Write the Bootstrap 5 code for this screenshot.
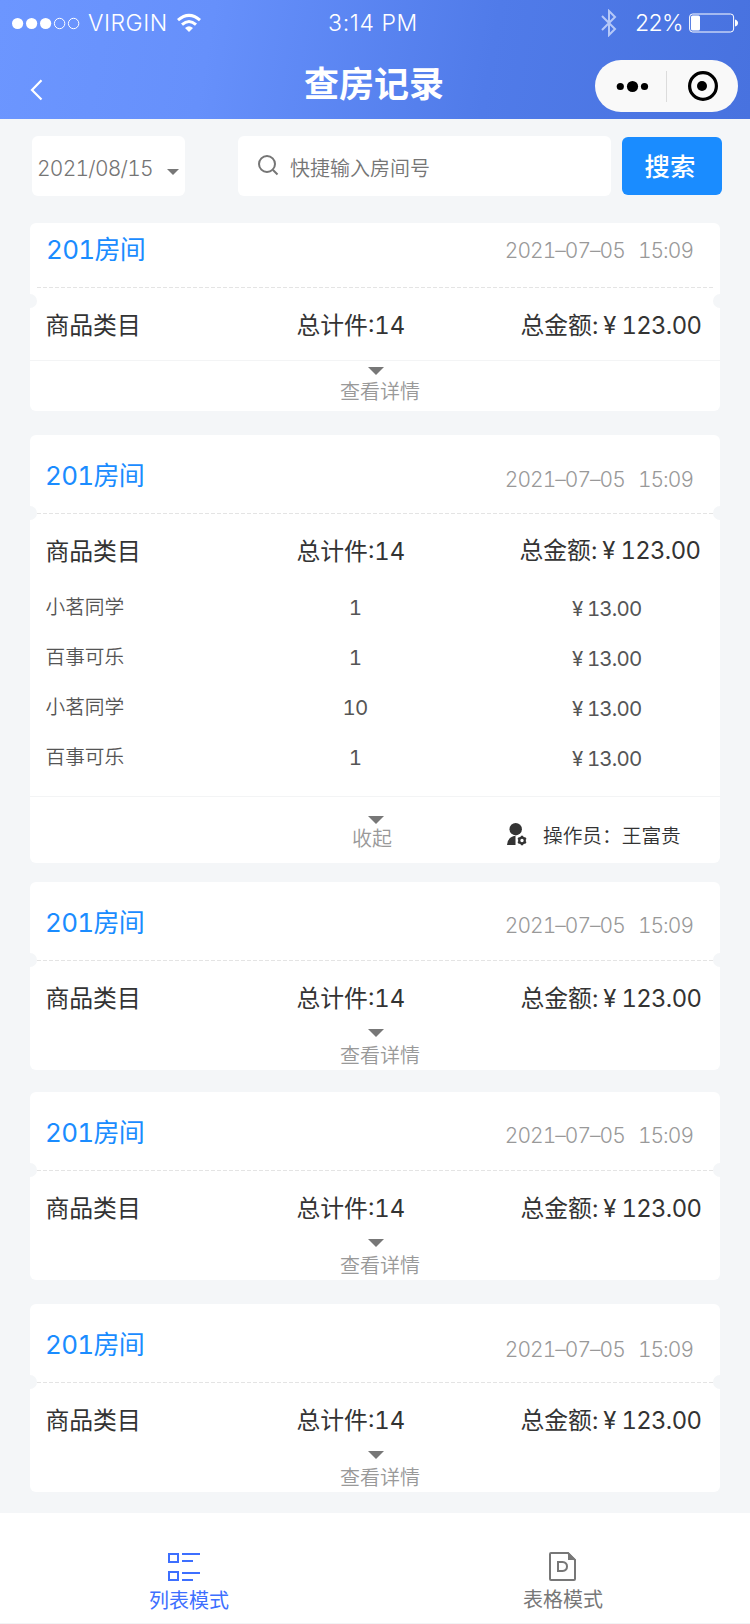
<!DOCTYPE html>
<html lang="zh-CN">
<head>
<meta charset="utf-8">
<meta name="viewport" content="width=device-width, initial-scale=1">
<title>查房记录</title>
<link href="https://cdn.jsdelivr.net/npm/bootstrap@5.3.0/dist/css/bootstrap.min.css" rel="stylesheet">
<style>
  body { font-family: Inter, "Noto Sans CJK SC", sans-serif; background: #f4f6f8; color: #333; font-size: 20px; line-height: 1.4; white-space: nowrap; overflow-x: hidden; font-variant-numeric: tabular-nums; }
  svg { display: block; flex: none; }
  .app-head { height: 119px; background: linear-gradient(100deg, #6c96ff 0%, #6690fb 28%, #507be9 65%, #4872df 100%); color: #fff; }
  .status { height: 44px; font-size: 23px; font-weight: 300; line-height: 46px; display: grid; grid-template-columns: 1fr auto 1fr; padding: 0 12px 0 12px; font-variant-numeric: normal; }
  .clock { letter-spacing: .6px; margin-left: -4px; }
  .carrier { letter-spacing: .5px; margin-left: 8px; }
  .title-bar { height: 75px; display: grid; grid-template-columns: 1fr auto 1fr; }
  .page-title { font-size: 35px; font-weight: 700; line-height: 80px; height: 75px; margin: 0 0 0 -2px; }
  .capsule { width: 143px; height: 52px; border-radius: 26px; background: #f9f9f9; margin: 16px 12px 0 auto; }
  .tools { padding: 17px 28px 0 32px; height: 104px; }
  .tool-box { height: 60px; border-radius: 6px; background: #fff; color: #757575; font-weight: 350; border: 0; }
  .tool-box > span:not(.tri) { padding-top: 6px; }
  .date-box { width: 153px; padding-left: 5px; }
  .date-text { font-size: 21px; width: 130px; letter-spacing: -.75px; }
  .search-box { width: 373px; margin-left: 53px; padding-left: 20px; }
  .search-btn { width: 100px; height: 58px; margin: 1px 0 0 11px; border-radius: 6px; background: #1a8cff; border: 0; color: #fff; font-size: 25.4px; font-weight: 500; padding: 3px 4px 0 0; }
  .tri { width: 16px; height: 8px; background: #777; clip-path: polygon(0 0, 100% 0, 50% 100%); }
  .tri-sm { width: 12px; height: 6px; position: relative; top: 2px; }

  .room { width: 690px; margin: 0 0 0 30px; background: #fff; border: 0; border-radius: 6px; }
  .room-head { height: 79px; padding: 0 27px 0 15px; }
  .room-head::after { content: ""; position: absolute; left: 7px; right: 7px; bottom: 0; height: 1px; background: repeating-linear-gradient(90deg, #e4e4e4 0 4px, transparent 4px 6px); }
  .notch { position: absolute; top: 71px; width: 7px; height: 14px; background: #f4f6f8; z-index: 1; }
  .notch-l { left: 0; border-radius: 0 7px 7px 0; }
  .notch-r { right: 0; border-radius: 7px 0 0 7px; }
  .room-name { font-size: 26px; line-height: 81px; color: #1a8cff; letter-spacing: -.7px; }
  .room-time { font-size: 21px; line-height: 87px; color: #999; font-weight: 350; word-spacing: 8.5px; letter-spacing: -.98px; }
  .totals { padding: 13px 0 0 15.5px; display: grid; grid-template-columns: 251px 224px 1fr; line-height: 50px; height: 62px; font-size: 23.8px; }
  .num { letter-spacing: -.6px; }
  .yen { margin: 0 5px 0 5px; }
  .more { color: #999; font-weight: 350; line-height: 28px; font-size: 20px; }
  .more .tri { margin-left: 2px; }
  .more-text { margin: 5px 0 0 10px; height: 28px; }

  .compact .room-head { height: 65px; }
  .compact .room-head .room-name { line-height: 54px; padding-left: 1px; }
  .compact .room-head .room-time { line-height: 56px; }
  .compact .notch { top: 71px; }
  .rule { height: 1px; background: #f3f4f5; }
  .item { display: grid; grid-template-columns: 251px 116px 1fr; height: 50px; padding-left: 16px; font-size: 19.7px; line-height: 50px; color: #555; }
  .item-name { font-weight: 350; margin-left: -.5px; }
  .item-qty { font-size: 20.5px; padding-top: 1px; letter-spacing: -.8px; }
  .item-price { padding: 2px 0 0 159px; font-size: 20.5px; letter-spacing: -.85px; }
  .item-price .yen { margin: 0 4.5px 0 0; }
  .open-foot { height: 66px; display: grid; grid-template-columns: 1fr 80px 1fr; }
  .operator { padding-left: 91px; padding-top: 3px; height: 76px; font-weight: 350; font-size: 19.7px; color: #333; }

  .tabs { height: 111px; background: #fff; margin-top: 21px; border-bottom: 1px solid #f2f3f5; font-size: 20px; line-height: 28px; color: #777; }
  .tabs a { text-decoration: none; color: inherit; }
  .tabs a.active { color: #3d6fff; }
</style>
</head>
<body>
<header class="app-head">
  <div class="status">
    <div class="d-flex align-items-center">
      <svg width="68" height="14" viewBox="0 0 68 14" fill="#fff" stroke="#fff"><g stroke="none"><circle cx="5.6" cy="7.5" r="5.6"/><circle cx="19.6" cy="7.5" r="5.6"/><circle cx="33.6" cy="7.5" r="5.6"/></g><g fill="none"><circle cx="47.6" cy="7.5" r="5.2"/><circle cx="61.6" cy="7.5" r="5.2"/></g></svg>
      <span class="carrier">VIRGIN</span>
      <svg style="margin-left:9px" width="24" height="20" viewBox="0 0 24 20" fill="none" stroke="#fff" stroke-width="3"><path d="M1 7.2Q12-2.4 23 7.2M5 11.6Q12 5.4 19 11.6"/><path d="M8 15Q12 11.5 16 15L12 19Z" fill="#fff" stroke="none"/></svg>
    </div>
    <span class="clock">3:14 PM</span>
    <div class="d-flex align-items-center justify-content-end">
      <svg style="margin-right:18px" width="16" height="28" viewBox="0 0 16 28" fill="none" stroke="#b5c8f8" stroke-width="2"><path d="M1 7 14 20 8 26V2L14 8 1 21"/></svg>
      <span style="letter-spacing:-.6px">22%</span>
      <svg style="margin-left:6px" width="49" height="20" viewBox="0 0 49 20" fill="none" stroke="#fff"><rect x=".6" y="1" width="44" height="18" rx="3"/><rect x="2" y="2.5" width="9" height="15" rx="1.5" fill="#fff" stroke="none"/><path d="M46 6.5Q49 7.5 49 10T46 13.5Z" fill="#fff" stroke="none"/></svg>
    </div>
  </div>
  <div class="title-bar">
    <a href="#" aria-label="返回"><svg style="margin:35px 0 0 30px" width="14" height="22" viewBox="0 0 14 22" fill="none" stroke="#fff" stroke-width="2.2"><path d="M11.5 1.2 2 11 11.5 20.5"/></svg></a>
    <h1 class="page-title">查房记录</h1>
    <div class="capsule">
      <svg width="143" height="52" viewBox="0 0 143 52"><circle cx="25.3" cy="26.5" r="3.6"/><circle cx="37.5" cy="26.5" r="5.6"/><circle cx="49.5" cy="26.5" r="3.6"/><path d="M71.5 11V42" stroke="#dcdcdc"/><circle cx="108" cy="26" r="13.4" fill="none" stroke="#000" stroke-width="3.2"/><circle cx="107" cy="26" r="5"/></svg>
    </div>
  </div>
</header>

<div class="tools d-flex align-items-start">
  <div class="tool-box date-box d-flex align-items-center"><span class="date-text">2021/08/15</span><span class="tri tri-sm mt-2"></span></div>
  <div class="tool-box search-box d-flex align-items-center">
    <svg width="22" height="22" viewBox="0 0 22 22" fill="none" stroke="#757575" stroke-width="2"><circle cx="9" cy="9" r="8"/><path d="M15 15 19.5 19.5"/></svg>
    <span style="margin-left:10px">快捷输入房间号</span>
  </div>
  <button class="btn search-btn" type="button">搜索</button>
</div>

<main>
  <section class="card room compact" style="margin-bottom:24px">
    <i class="notch notch-l"></i><i class="notch notch-r"></i>
    <div class="room-head position-relative d-flex justify-content-between"><span class="room-name">201房间</span><span class="room-time">2021–07–05 15:09</span></div>
    <div class="totals"><span>商品类目</span><span>总计件:14</span><span>总金额:<span class="yen">¥</span><span class="num">123.00</span></span></div>
    <div class="rule" style="margin-top:10px"></div>
    <div class="more d-flex flex-column align-items-center" style="padding:6px 0 5px"><i class="tri"></i><span class="more-text" style="margin-top:3px">查看详情</span></div>
  </section>

  <section class="card room" style="margin-bottom:19px">
    <i class="notch notch-l"></i><i class="notch notch-r"></i>
    <div class="room-head position-relative d-flex justify-content-between"><span class="room-name">201房间</span><span class="room-time" style="line-height:89px">2021–07–05 15:09</span></div>
    <div class="totals"><span>商品类目</span><span>总计件:14</span><span style="margin:-1px 0 0 -1px">总金额:<span class="yen">¥</span><span class="num">123.00</span></span></div>
    <div style="padding:6px 0 14px">
      <div class="item"><span class="item-name">小茗同学</span><span class="item-qty text-center">1</span><span class="item-price"><span class="yen">¥</span>13.00</span></div>
      <div class="item"><span class="item-name">百事可乐</span><span class="item-qty text-center">1</span><span class="item-price"><span class="yen">¥</span>13.00</span></div>
      <div class="item"><span class="item-name">小茗同学</span><span class="item-qty text-center">10</span><span class="item-price"><span class="yen">¥</span>13.00</span></div>
      <div class="item"><span class="item-name">百事可乐</span><span class="item-qty text-center">1</span><span class="item-price"><span class="yen">¥</span>13.00</span></div>
    </div>
    <div class="rule"></div>
    <div class="open-foot">
      <span></span>
      <div class="more d-flex flex-column align-items-center" style="padding-top:19px"><i class="tri"></i><span style="margin:1px 0 0 -6px">收起</span></div>
      <div class="operator d-flex align-items-center">
        <svg style="margin:-4px 16px 0 1px" width="20" height="23" viewBox="0 0 20 23" fill="#333"><circle cx="8.7" cy="6.2" r="6.2"/><path d="M0 22Q.5 14.5 7 13H8.500V22Z"/><circle cx="15" cy="17.5" r="2.8" fill="none" stroke="#333" stroke-width="2.2"/><path d="M15 12.800v2M15 20.200v2M11 15.100l1.700 1M17.300 18.900l1.700 1M11 19.900l1.700-1M17.300 16.100l1.700-1" stroke="#333" stroke-width="2.2"/></svg>
        <span>操作员：王富贵</span>
      </div>
    </div>
  </section>

  <section class="card room" style="margin-bottom:22px">
    <i class="notch notch-l"></i><i class="notch notch-r"></i>
    <div class="room-head position-relative d-flex justify-content-between"><span class="room-name">201房间</span><span class="room-time">2021–07–05 15:09</span></div>
    <div class="totals"><span>商品类目</span><span>总计件:14</span><span>总金额:<span class="yen">¥</span><span class="num">123.00</span></span></div>
    <div class="more d-flex flex-column align-items-center" style="padding-top:6px"><i class="tri"></i><span class="more-text">查看详情</span></div>
  </section>

  <section class="card room" style="margin-bottom:24px">
    <i class="notch notch-l"></i><i class="notch notch-r"></i>
    <div class="room-head position-relative d-flex justify-content-between"><span class="room-name">201房间</span><span class="room-time">2021–07–05 15:09</span></div>
    <div class="totals"><span>商品类目</span><span>总计件:14</span><span>总金额:<span class="yen">¥</span><span class="num">123.00</span></span></div>
    <div class="more d-flex flex-column align-items-center" style="padding-top:6px"><i class="tri"></i><span class="more-text">查看详情</span></div>
  </section>

  <section class="card room">
    <i class="notch notch-l"></i><i class="notch notch-r"></i>
    <div class="room-head position-relative d-flex justify-content-between"><span class="room-name">201房间</span><span class="room-time" style="line-height:91px">2021–07–05 15:09</span></div>
    <div class="totals"><span>商品类目</span><span>总计件:14</span><span>总金额:<span class="yen">¥</span><span class="num">123.00</span></span></div>
    <div class="more d-flex flex-column align-items-center" style="padding-top:6px"><i class="tri"></i><span class="more-text">查看详情</span></div>
  </section>
</main>

<nav class="tabs d-flex">
  <a href="#" class="active col-6 d-flex flex-column align-items-center">
    <svg style="margin:40px 0 6px -8px" width="32" height="28" viewBox="0 0 32 28" fill="none" stroke="#3d6fff" stroke-width="2"><path d="M1 1h9v8H1zM1 19h9v8H1zM14 1h18M14 8h11M14 20h18M14 27h11"/></svg>
    <span style="margin-left:3px">列表模式</span>
  </a>
  <a href="#" class="col-6 d-flex flex-column align-items-center">
    <svg style="margin:39px 0 5px" width="27" height="29" viewBox="0 0 27 29" fill="none" stroke="#777" stroke-width="2"><path d="M2 1H19L26 8V27Q26 28 25 28H2Q1 28 1 27V2Q1 1 2 1Z"/><path d="M19 0V8H27Z" fill="#777" stroke="none"/><path d="M9 10H13.500Q18 10.500 18 14.500T13.500 19H9Z"/></svg>
    <span style="margin-left:1px">表格模式</span>
  </a>
</nav>
<script src="https://cdn.jsdelivr.net/npm/bootstrap@5.3.0/dist/js/bootstrap.bundle.min.js"></script>
</body>
</html>
